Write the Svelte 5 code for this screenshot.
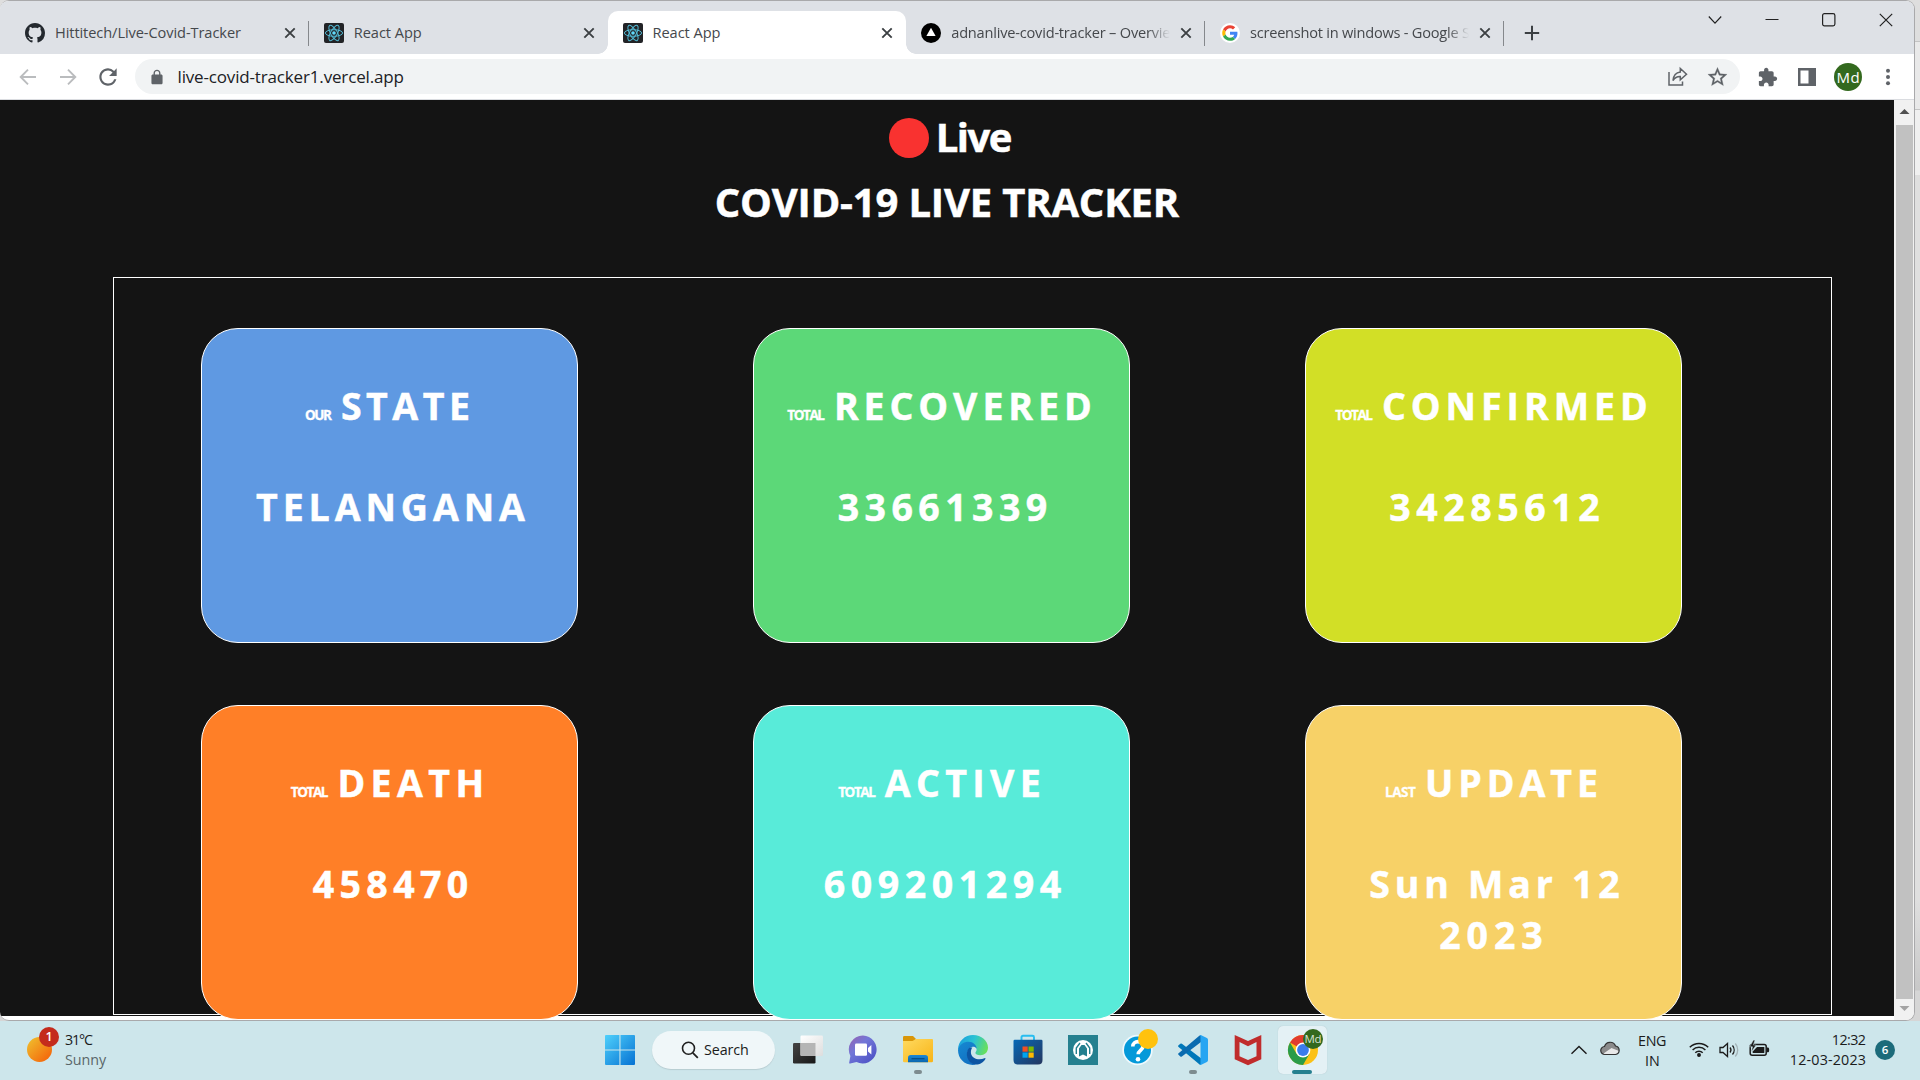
<script>
  const tabs = [
    { icon: 'github', title: 'Hittitech/Live-Covid-Tracker', width: 185, divider: true },
    { icon: 'react', title: 'React App', width: 67 },
    { icon: 'react', title: 'React App', width: 67, active: true },
    { icon: 'vercel', title: 'adnanlive-covid-tracker – Overview', width: 231, divider: true },
    { icon: 'google', title: 'screenshot in windows - Google Search', width: 256, divider: true }
  ];

  const cards = [
    { tone: 'blue', prefix: 'OUR', prefixWidth: 27, label: 'STATE', labelWidth: 126, value: [['TELANGANA', 269]] },
    { tone: 'green', prefix: 'TOTAL', prefixWidth: 38, label: 'RECOVERED', labelWidth: 253, value: [['33661339', 208]] },
    { tone: 'lime', prefix: 'TOTAL', prefixWidth: 38, label: 'CONFIRMED', labelWidth: 262, value: [['34285612', 209]] },
    { tone: 'orange', prefix: 'TOTAL', prefixWidth: 38, label: 'DEATH', labelWidth: 141, value: [['458470', 155]] },
    { tone: 'teal', prefix: 'TOTAL', prefixWidth: 38, label: 'ACTIVE', labelWidth: 154, value: [['609201294', 236]] },
    { tone: 'gold', prefix: 'LAST', prefixWidth: 30, label: 'UPDATE', labelWidth: 168, value: [['Sun Mar 12', 249], ['2023', 101]] }
  ];

  const apps = [
    { name: 'taskview' },
    { name: 'chat' },
    { name: 'explorer', open: true },
    { name: 'edge' },
    { name: 'store' },
    { name: 'alert' },
    { name: 'help' },
    { name: 'vscode', open: true },
    { name: 'mcafee' },
    { name: 'chrome', current: true }
  ];

  // Tracks a run of text so that its ink spans the given width.
  function fit(node, width) {
    const text = node.textContent;
    const style = getComputedStyle(node);
    const ctx = document.createElement('canvas').getContext('2d');
    ctx.font = `${style.fontWeight} ${style.fontSize} ${style.fontFamily}`;
    const m = ctx.measureText(text);
    const ink = m.actualBoundingBoxLeft + m.actualBoundingBoxRight;
    const spacing = (width - ink) / (text.length - 1);
    node.style.letterSpacing = `${spacing}px`;
    node.style.marginRight = `${-spacing}px`;
  }
</script>

{#snippet favicon(name)}
  {#if name === 'github'}
    <svg width="20" height="20" viewBox="0 0 16 16" fill="#24292f"><path d="M8 0C3.58 0 0 3.58 0 8c0 3.54 2.29 6.53 5.47 7.59.4.07.55-.17.55-.38 0-.19-.01-.82-.01-1.49-2.01.37-2.53-.49-2.69-.94-.09-.23-.48-.94-.82-1.13-.28-.15-.68-.52-.01-.53.63-.01 1.08.58 1.23.82.72 1.21 1.87.87 2.33.66.07-.52.28-.87.51-1.07-1.78-.2-3.64-.89-3.64-3.95 0-.87.31-1.59.82-2.15-.08-.2-.36-1.02.08-2.12 0 0 .67-.21 2.2.82.64-.18 1.32-.27 2-.27.68 0 1.36.09 2 .27 1.53-1.04 2.2-.82 2.2-.82.44 1.1.16 1.92.08 2.12.51.56.82 1.27.82 2.15 0 3.07-1.87 3.75-3.65 3.95.29.25.54.73.54 1.48 0 1.07-.01 1.93-.01 2.2 0 .21.15.46.55.38A8.013 8.013 0 0016 8c0-4.42-3.58-8-8-8z" /></svg>
  {:else if name === 'react'}
    <svg width="20" height="20" viewBox="0 0 20 20"><rect width="20" height="20" rx="2" fill="#222326" />
      <g fill="none" stroke="#53b9d3" stroke-width="1"><ellipse cx="10" cy="10" rx="8.6" ry="3.3" /><ellipse cx="10" cy="10" rx="8.6" ry="3.3" transform="rotate(60 10 10)" /><ellipse cx="10" cy="10" rx="8.6" ry="3.3" transform="rotate(120 10 10)" /></g>
      <circle cx="10" cy="10" r="1.8" fill="#61dafb" /></svg>
  {:else if name === 'vercel'}
    <svg width="20" height="20" viewBox="0 0 20 20"><circle cx="10" cy="10" r="10" /><path d="M10 4.800 14.600 13H5.400z" fill="#fff" /></svg>
  {:else}
    <svg width="20" height="20" viewBox="0 0 20 20"><circle cx="10" cy="10" r="10" fill="#fff" />
      <g transform="translate(2.2 2.2) scale(.325)"><path fill="#EA4335" d="M24 9.5c3.54 0 6.71 1.22 9.21 3.6l6.85-6.85C35.9 2.38 30.47 0 24 0 14.62 0 6.51 5.38 2.56 13.22l7.98 6.19C12.43 13.72 17.74 9.5 24 9.5z" /><path fill="#4285F4" d="M46.98 24.55c0-1.57-.15-3.09-.38-4.55H24v9.02h12.94c-.58 2.96-2.26 5.48-4.78 7.18l7.73 6c4.51-4.18 7.09-10.36 7.09-17.65z" /><path fill="#FBBC05" d="M10.53 28.59c-.48-1.45-.76-2.99-.76-4.59s.27-3.14.76-4.59l-7.98-6.19C.92 16.46 0 20.12 0 24c0 3.88.92 7.54 2.56 10.78l7.97-6.19z" /><path fill="#34A853" d="M24 48c6.48 0 11.93-2.13 15.89-5.81l-7.73-6c-2.15 1.45-4.92 2.3-8.16 2.3-6.26 0-11.57-4.22-13.47-9.91l-7.98 6.19C6.51 42.62 14.62 48 24 48z" /></g></svg>
  {/if}
{/snippet}

{#snippet appIcon(name)}
  {#if name === 'taskview'}
    <svg width="32" height="32" viewBox="0 0 32 32">
      <defs><linearGradient id="tvd" x1="0" y1="0" x2="1" y2="1"><stop stop-color="#444" /><stop offset="1" stop-color="#181818" /></linearGradient><linearGradient id="tvl" x1="0" y1="0" x2="1" y2="1"><stop stop-color="#fff" /><stop offset="1" stop-color="#ddd" /></linearGradient></defs>
      <rect x="1" y="9" width="22.5" height="20.5" rx="1.2" fill="url(#tvd)" /><rect x="8.5" y="1.5" width="22.5" height="20.5" rx="1.2" fill="url(#tvl)" /><path d="M8.5 9h15v13h-14a1 1 0 0 1-1-1z" fill="#b5b5b5" /></svg>
  {:else if name === 'chat'}
    <svg width="32" height="32" viewBox="0 0 32 32">
      <defs><linearGradient id="ch" x1="0" y1="0" x2=".9" y2="1"><stop stop-color="#9a62ae" /><stop offset=".4" stop-color="#7377d8" /><stop offset="1" stop-color="#4a4fc4" /></linearGradient></defs>
      <path d="M16 1.5a14 14 0 1 1-6.5 26.6L3.2 29.6q-1.3.2-1-1.2L3.4 22A14 14 0 0 1 16 1.5z" fill="url(#ch)" /><rect x="8" y="9.5" width="12" height="12.3" rx="1.3" fill="#fff" /><path d="m21 14 3.4-3v9.6l-3.4-3z" fill="#fff" /></svg>
  {:else if name === 'explorer'}
    <svg width="32" height="32" viewBox="0 0 32 32">
      <defs><linearGradient id="fo" x1="0" y1="0" x2="1" y2="1"><stop stop-color="#ffda60" /><stop offset="1" stop-color="#f8b417" /></linearGradient><linearGradient id="fb" x1="0" y1="0" x2="0" y2="1"><stop stop-color="#1b87d6" /><stop offset="1" stop-color="#0966ae" /></linearGradient></defs>
      <path d="M1 3.3Q1 2 2.3 2H11l3 3-3 4H1z" fill="#d99608" /><path d="M1 7h9.5L14 5h16q1 0 1 1v21q0 1.3-1.3 1.3H2.3Q1 28.3 1 27z" fill="url(#fo)" /><path d="M6 28.3v-4.5Q6 21 8.8 21h14.4Q26 21 26 23.8v4.5z" fill="url(#fb)" /><path d="M9.500 24.700h13" stroke="#064f8a" stroke-width="1.3" /></svg>
  {:else if name === 'edge'}
    <svg width="32" height="32" viewBox="0 0 32 32">
      <defs><linearGradient id="e1" x1="0" y1=".3" x2="1" y2=".55"><stop stop-color="#1a9fde" /><stop offset=".5" stop-color="#2bc3d2" /><stop offset="1" stop-color="#69e05a" /></linearGradient><linearGradient id="e2" x1="0" y1="0" x2=".5" y2="1"><stop stop-color="#1689d2" /><stop offset="1" stop-color="#1271c2" /></linearGradient></defs>
      <path d="M1 16C1 7 8 1 16 1c8.5 0 15 6 15 12.5 0 5-3.6 7.7-7.6 7.7-3.3 0-5-1.2-5-2.3 0-.9 1.2-1.2 1.2-3.3 0-2.6-3-5.6-7.6-5.6-4.5 0-8.5 2-11 6z" fill="url(#e1)" />
      <path d="M1 16c1.5-6 6-8.3 10.5-8.3 4.7 0 8.2 3.5 8.2 7-1.2-1.7-3-2.2-4.7-1.7-4 1.2-5.7 6-4 10.3 1.3 3.6 4 6.5 8 7.3C9 32.5 1 25.5 1 16z" fill="url(#e2)" />
      <path d="M12.5 13.8C8 17 8.8 29.5 19 30.6c4 0 7.5-2.3 9.4-5.7.3-.7-.3-1-.9-.7-5.5 2.500-12.500.5-13.500-4.700-.3-2 .1-4.200 1.400-5.900z" fill="#0d55a3" /></svg>
  {:else if name === 'store'}
    <svg width="32" height="32" viewBox="0 0 32 32">
      <defs><linearGradient id="st" x1="0" y1="0" x2="1" y2="1"><stop stop-color="#0769b6" /><stop offset="1" stop-color="#24365f" /></linearGradient></defs>
      <path d="M9.5 7V3.2Q9.5 1.8 11 1.800h9.500q1.500 0 1.500 1.400V7" fill="none" stroke="#27bdf0" stroke-width="1.9" /><path d="M1.5 7q0-1.2 1.2-1.200h26.600q1.200 0 1.200 1.200v19q0 4.500-4.500 4.500H6Q1.500 30.500 1.500 26z" fill="url(#st)" />
      <path d="M10.500 12.500h5.200v5.200h-5.200z" fill="#f25022" /><path d="M16.500 12.500h5.200v5.200h-5.200z" fill="#7fba00" /><path d="M10.500 18.500h5.200v5.200h-5.200z" fill="#00a4ef" /><path d="M16.500 18.500h5.200v5.200h-5.200z" fill="#ffb900" /></svg>
  {:else if name === 'alert'}
    <svg width="32" height="32" viewBox="0 0 32 32"><path d="M1 1h30v30H1z" fill="#25808f" /><circle cx="16" cy="16" r="10" fill="#fff" />
      <path d="M12 22.500v-8L14.500 11h3l2.500 3.500v8L16 20.500z" fill="#25808f" /><path d="M9.300 20v-6l3.700-5M22.700 20v-6L19 9" fill="none" stroke="#25808f" stroke-width="1.400" /></svg>
  {:else if name === 'help'}
    <svg width="32" height="32" viewBox="0 0 32 32"><circle cx="15.500" cy="16" r="15.200" fill="#eef9fd" /><circle cx="15.500" cy="16" r="13.500" fill="#0499d9" /><path d="M10.800 12.500c0-6.500 10.200-6.300 10.200-.3 0 4-4.800 4.300-4.800 8" fill="none" stroke="#fff" stroke-width="3.600" /><circle cx="16" cy="25.200" r="2.300" fill="#fff" /></svg>
  {:else if name === 'vscode'}
    <svg width="32" height="32" viewBox="0 0 32 32"><path d="m1.300 11.600 2-1.800q.8-.6 1.600 0L24 24.300v6.400q-1 .2-1.700-.5L1.300 12.800q-.5-.6 0-1.200z" fill="#0077b9" /><path d="m1.300 20.600 2 1.800q.8.600 1.600 0L24 7.900V1.300q-1-.2-1.700.5L1.300 19.400q-.5.600 0 1.200z" fill="#0a6bb0" /><path d="M22.300 1.700q.9-.9 2-.4l5.600 2.700q1.100.6 1.100 1.800v20.400q0 1.200-1.100 1.800l-5.600 2.700q-1.100.5-2-.4 1 .5 1.200-.8V2.500q-.2-1.300-1.200-.8z" fill="#27a5f2" /></svg>
  {:else if name === 'mcafee'}
    <svg width="32" height="32" viewBox="0 0 32 32"><path d="M2.700 1 16 7l13.300-6v24.200L16 31.300 2.700 25.200zM7.500 8v14.200L16 26l8.500-3.800V8L16 12.200z" fill="#c02c2c" fill-rule="evenodd" /></svg>
  {:else}
    <svg width="32" height="32" viewBox="0 0 32 32"><circle cx="16" cy="16" r="15" fill="#fbc116" /><path d="M16 16 3 8.500A15 15 0 0 1 29 8.500H16z" fill="#e23b2e" /><path d="M3 8.500A15 15 0 0 0 16 31l6.500-11.200L16 16l-6.500 3.700z" fill="#2a9c49" /><circle cx="16" cy="16" r="7.400" fill="#fff" /><circle cx="16" cy="16" r="5.900" fill="#3b7cec" /></svg>
  {/if}
{/snippet}

<div class="screen">
  <div class="window">
    <header class="tabstrip">
      <div class="tabs">
        {#each tabs as tab}
          <div class="tab" class:active={tab.active} class:divider={tab.divider}>
            {@render favicon(tab.icon)}
            <div class="tab-title" class:faded={tab.width > 200}><span use:fit={tab.width}>{tab.title}</span></div>
            <svg class="close" width="12" height="12" viewBox="0 0 12 12"><path d="m1.300 1.300 9.400 9.400m0-9.400-9.400 9.400" stroke="#3c4043" stroke-width="1.900" /></svg>
          </div>
        {/each}
        <svg class="new-tab" width="16" height="16" viewBox="0 0 16 16"><path d="M8 .8v14.400M.8 8h14.400" stroke="#3c4043" stroke-width="2" /></svg>
      </div>
      <div class="controls">
        <svg width="14" height="14" viewBox="0 0 14 14"><path d="m.8 3.500 6.200 6.700 6.200-6.700" /></svg>
        <svg width="14" height="14" viewBox="0 0 14 14"><path d="M.5 6.500h13" /></svg>
        <svg width="14" height="14" viewBox="0 0 14 14"><rect x=".6" y=".6" width="12.300" height="12.300" rx="1.800" /></svg>
        <svg width="14" height="14" viewBox="0 0 14 14"><path d="m.8.8 12.400 12.400m0-12.400L.8 13.200" /></svg>
      </div>
    </header>

    <div class="toolbar">
      <div class="nav">
        <svg width="18" height="18" viewBox="0 0 18 18"><path d="M17 9H2M9 1.700 1.700 9 9 16.300" fill="none" stroke="#babcbe" stroke-width="1.900" /></svg>
        <svg width="18" height="18" viewBox="0 0 18 18"><path d="M1 9h15M9 1.700 16.300 9 9 16.300" fill="none" stroke="#babcbe" stroke-width="1.900" /></svg>
        <svg width="26" height="26" viewBox="0 0 24 24"><path fill="#5f6368" d="M17.650 6.350A7.958 7.958 0 0012 4c-4.420 0-7.990 3.580-7.990 8s3.570 8 7.990 8c3.730 0 6.840-2.550 7.730-6h-2.080A5.990 5.990 0 0112 18c-3.310 0-6-2.690-6-6s2.690-6 6-6c1.660 0 3.140.69 4.220 1.780L13 11h7V4l-2.350 2.350z" /></svg>
      </div>
      <div class="omnibox">
        <svg width="16" height="16" viewBox="2 0 20 23"><path fill="#5f6368" d="M18 8h-1V6c0-2.760-2.240-5-5-5S7 3.240 7 6v2H6c-1.100 0-2 .9-2 2v10c0 1.100.9 2 2 2h12c1.100 0 2-.9 2-2V10c0-1.100-.9-2-2-2zM9 6c0-1.660 1.340-3 3-3s3 1.340 3 3v2H9V6z" /></svg>
        <div class="url"><span use:fit={225}>live-covid-tracker1.vercel.app</span></div>
        <svg width="22" height="22" viewBox="0 0 22 22" fill="none" stroke="#5f6368" stroke-width="1.500"><path d="M2 6v13h13.500v-3.500" /><path d="M6 14.500C6.500 9 9.500 6.500 13.300 6V2.500l6.200 5.700-6.200 5.600v-3.400C10 10.200 7.800 11.700 6 14.500z" /></svg>
        <svg width="22" height="22" viewBox="0 0.500 23 23"><path fill="#5f6368" stroke="#5f6368" stroke-width=".3" d="M22 9.240l-7.190-.62L12 2 9.190 8.630 2 9.240l5.460 4.730L5.820 21 12 17.270 18.180 21l-1.630-7.030L22 9.240zM12 15.400l-3.760 2.270 1-4.280-3.320-2.880 4.380-.38L12 6.100l1.710 4.040 4.380.38-3.320 2.880 1 4.280L12 15.400z" /></svg>
      </div>
      <div class="actions">
        <svg width="20" height="20" viewBox="1 0 23 23"><path fill="#5f6368" d="M20.500 11H19V7c0-1.100-.9-2-2-2h-4V3.500C13 2.120 11.880 1 10.500 1S8 2.120 8 3.500V5H4c-1.100 0-1.990.9-1.990 2v3.800H3.500c1.490 0 2.700 1.210 2.700 2.700s-1.210 2.700-2.700 2.700H2V20c0 1.100.9 2 2 2h3.800v-1.500c0-1.490 1.210-2.700 2.700-2.700 1.490 0 2.700 1.210 2.700 2.700V22H17c1.100 0 2-.9 2-2v-4h1.500c1.380 0 2.500-1.120 2.500-2.500S21.880 11 20.500 11z" /></svg>
        <svg width="20" height="20" viewBox="0 0 20 20"><path fill="#5f6368" fill-rule="evenodd" d="M1 1h18v18H1zM3.500 3.500v13h8v-13z" /></svg>
        <div class="avatar"><span use:fit={21}>Md</span></div>
        <svg width="20" height="20" viewBox="0 0 20 20" fill="#5f6368"><circle cx="9" cy="3.700" r="2" /><circle cx="9" cy="10" r="2" /><circle cx="9" cy="16.300" r="2" /></svg>
      </div>
    </div>

    <div class="viewport">
      <main class="page">
        <div class="live"><i></i><span use:fit={72}>Live</span></div>
        <h1><span use:fit={463}>COVID-19 LIVE TRACKER</span></h1>
        <section class="grid">
          {#each cards as card}
            <article class="card {card.tone}">
              <div class="card-label"><small use:fit={card.prefixWidth}>{card.prefix}</small><span use:fit={card.labelWidth}>{card.label}</span></div>
              <div class="card-value">
                {#each card.value as [line, width]}
                  <div><span use:fit={width}>{line}</span></div>
                {/each}
              </div>
            </article>
          {/each}
        </section>
      </main>
      <div class="scrollbar">
        <svg width="20" height="25" viewBox="0 0 20 25"><path d="M5.500 14 10.500 9l5 5z" fill="#505050" /></svg>
        <div class="thumb"></div>
        <svg width="20" height="21" viewBox="0 0 20 21"><path d="m5.500 7 5 5 5-5z" fill="#a3a3a3" /></svg>
      </div>
    </div>
  </div>

  <footer class="taskbar">
    <div class="weather">
      <div class="sun"><b>1</b></div>
      <div class="stack left"><div><span use:fit={28}>31°C</span></div><div class="dim"><span use:fit={42}>Sunny</span></div></div>
    </div>
    <div class="dock">
      <div class="slot">
        <svg width="30" height="30" viewBox="0 0 30 30"><defs><linearGradient id="win" gradientUnits="userSpaceOnUse" x1="0" y1="0" x2="30" y2="30"><stop stop-color="#4fd0fb" /><stop offset="1" stop-color="#0672d3" /></linearGradient></defs><path fill="url(#win)" d="M0 1q0-1 1-1h13.400v14.400H0zM15.500 0H29q1 0 1 1v13.400H15.500zM0 15.500h14.400V30H1q-1 0-1-1zM15.500 15.500H30V29q0 1-1 1H15.500z" /></svg>
      </div>
      <div class="search">
        <svg width="18" height="18" viewBox="0 0 18 18"><circle cx="7.500" cy="7.300" r="6" fill="none" stroke="#202020" stroke-width="1.600" /><path d="m11.800 11.800 5 5" stroke="#202020" stroke-width="1.800" /></svg>
        <span use:fit={44}>Search</span>
      </div>
      {#each apps as app}
        <div class="slot" class:current={app.current} class:open={app.open}>
          {@render appIcon(app.name)}
          {#if app.name === 'help'}<i class="dot"></i>{/if}
          {#if app.name === 'chrome'}<div class="md"><span use:fit={16}>Md</span></div>{/if}
        </div>
      {/each}
    </div>
    <div class="tray">
      <svg class="up" width="18" height="10" viewBox="0 0 18 10"><path d="m1.500 8.800 7.500-7.300 7.500 7.300" fill="none" stroke="#1b1b1b" stroke-width="1.400" /></svg>
      <svg class="cloud" width="20" height="16" viewBox="0 0 20 16"><path d="M5 14.500a4 4 0 0 1-.5-8A5.800 5.800 0 0 1 15.500 6a4.300 4.300 0 0 1 0 8.500z" fill="#8b8b8b" /><path d="M3.500 13.500 11.500 8l7.500 3q-.5 3-4 3.500H5z" fill="#e9e9e9" /><path d="M5 14.500a4 4 0 0 1-.5-8A5.800 5.800 0 0 1 15.500 6a4.300 4.300 0 0 1 0 8.500z" fill="none" stroke="#333" stroke-width="1.200" /></svg>
      <div class="stack lang"><div><span use:fit={27}>ENG</span></div><div><span use:fit={13}>IN</span></div></div>
      <svg class="wifi" width="20" height="16" viewBox="0 0 20 16" fill="none" stroke="#1b1b1b" stroke-width="1.500"><path d="M.8 6.200a13 13 0 0 1 18.400 0M3.600 9a9 9 0 0 1 12.800 0M6.300 11.700a5.300 5.300 0 0 1 7.400 0" /><circle cx="10" cy="14" r="1.200" fill="#1b1b1b" /></svg>
      <svg class="sound" width="21" height="16" viewBox="0 0 21 16" fill="none" stroke="#1b1b1b" stroke-width="1.300"><path d="M1 5.500h3l4.500-4v13l-4.500-4H1z" /><path d="M11 5.500a4 4 0 0 1 0 5M13.500 3.500a7 7 0 0 1 0 9" /><path d="M16.300 1.500a10 10 0 0 1 0 13" stroke="#a4b3b7" /></svg>
      <svg class="battery" width="21" height="17" viewBox="0 0 21 17"><rect x="1.200" y="4.500" width="16" height="10.800" rx="2" fill="none" stroke="#1b1b1b" stroke-width="1.500" /><path d="M8 7h7.300v6H3.700v-1.500z" fill="#1b1b1b" /><path d="M18 7.500h1.200q1 .2 1 2.400t-1 2.400H18z" fill="#1b1b1b" /><path d="M4.500 0 .5 6.800h3L2.300 12 7.200 5H4.300L6 .2z" fill="#1b1b1b" stroke="#cde6eb" stroke-width=".5" /></svg>
      <div class="stack clock"><div><span use:fit={33}>12:32</span></div><div><span use:fit={75}>12-03-2023</span></div></div>
      <b class="count">6</b>
    </div>
  </footer>
</div>

<style>
  :global(body) {
    margin: 0;
    overflow: hidden;
  }
  .screen {
    width: 1920px;
    height: 1080px;
    overflow: hidden;
    display: flex;
    flex-direction: column;
    font-family: 'Open Sans', 'Noto Sans', sans-serif;
    background: linear-gradient(#dedede 41px, #c4c4c4 41px 42px, #e9e9e9 42px 109px, #c4c4c4 109px 110px, #f0f0f0 110px 175px, #dfdfdf 175px 900px, #c8c8c8 990px, #d6d6d6 991px);
  }
  svg {
    display: block;
    flex: none;
  }
  span {
    white-space: pre;
  }
  .window {
    box-sizing: border-box;
    width: 1915px;
    height: 1021px;
    border: solid #a9a9ab;
    border-width: 1px 1px 1px 0;
    border-radius: 9px;
    overflow: hidden;
    background: #fff;
  }
  .tabstrip {
    height: 53px;
    background: #dee1e6;
    display: flex;
    justify-content: space-between;
  }
  .tabs {
    display: flex;
    padding: 10px 0 0 10px;
  }
  .tab {
    box-sizing: border-box;
    position: relative;
    width: 298.750px;
    padding: 0 23px 0 15px;
    display: flex;
    align-items: center;
    font-size: 14.600px;
    line-height: 24px;
    color: #45484c;
  }
  .tab-title {
    width: 219px;
    margin: -1px 0 0 10px;
    overflow: hidden;
  }
  .tab-title.faded {
    mask-image: linear-gradient(90deg, #000 90%, transparent 100%);
  }
  .close {
    margin-left: auto;
    margin-right: -10px;
  }
  .active {
    background: #fff;
    border-radius: 10px 10px 0 0;
  }
  .active::before,
  .active::after {
    content: '';
    position: absolute;
    bottom: 0;
    width: 10px;
    height: 10px;
  }
  .active::before {
    left: -10px;
    background: radial-gradient(circle at 0 0, transparent 9.500px, #fff 10px);
  }
  .active::after {
    right: -10px;
    background: radial-gradient(circle at 100% 0, transparent 9.500px, #fff 10px);
  }
  .divider::after {
    content: '';
    position: absolute;
    right: 0;
    top: 10px;
    width: 1px;
    height: 25px;
    background: #85888c;
  }
  .new-tab {
    margin: 14px 0 0 20px;
  }
  .controls {
    display: flex;
    gap: 43px;
    padding: 12px 21px 0 0;
    fill: none;
    stroke: #222;
    stroke-width: 1.200;
  }
  .toolbar {
    height: 45px;
    display: flex;
    align-items: center;
    border-bottom: 1px solid #dadce0;
  }
  .nav {
    box-sizing: border-box;
    width: 135px;
    padding-left: 19px;
    display: flex;
    align-items: center;
    gap: 22px;
  }
  .nav svg:last-child {
    margin-left: -4px;
  }
  .omnibox {
    box-sizing: border-box;
    width: 1605px;
    height: 35px;
    border-radius: 18px;
    background: #f1f3f4;
    padding: 0 12px 0 14px;
    display: flex;
    align-items: center;
  }
  .url {
    flex: 1;
    margin-left: 12.500px;
    font-size: 17px;
    line-height: 24px;
    color: #202124;
  }
  .omnibox svg:last-child {
    margin-left: 17px;
  }
  .actions {
    display: flex;
    align-items: center;
    padding-left: 18px;
    gap: 19px;
  }
  .avatar {
    width: 28px;
    height: 28px;
    margin: 0 -2px;
    border-radius: 50%;
    background: #33691e;
    color: #fff;
    font-size: 15px;
    line-height: 28px;
    text-align: center;
  }
  .viewport {
    height: 920px;
    display: flex;
    overflow: hidden;
  }
  .page {
    box-sizing: border-box;
    width: 1894px;
    height: 916px;
    padding-top: 12px;
    background: #141414;
    color: #fff;
    font-weight: 700;
    -webkit-text-stroke: .5px #fff;
  }
  .live,
  h1 {
    margin: 0;
    height: 50px;
    font-size: 40px;
    line-height: 50px;
    text-align: center;
  }
  .live {
    display: flex;
    align-items: center;
    justify-content: center;
    gap: 7px;
    padding-left: 7px;
  }
  .live i {
    width: 40px;
    height: 40px;
    margin-top: 2px;
    border-radius: 50%;
    background: #f93230;
  }
  h1 {
    margin-top: 15px;
  }
  .grid {
    box-sizing: border-box;
    width: 1719px;
    height: 738px;
    margin: 50px 0 0 113px;
    border: 1px solid #fff;
    padding: 50px 0 0 87px;
    display: grid;
    grid-template-columns: repeat(3, 377px);
    grid-auto-rows: 315px;
    gap: 62px 175px;
  }
  .card {
    box-sizing: border-box;
    border: 1px solid #fff;
    border-radius: 37px;
    padding-top: 51px;
    font-size: 37.500px;
    line-height: 51px;
    text-align: center;
  }
  .card-label {
    height: 51px;
    display: flex;
    justify-content: center;
    align-items: baseline;
    gap: 9px;
    padding-right: 4px;
  }
  .card-label small {
    font-size: 13.500px;
    -webkit-text-stroke-width: .3px;
  }
  .card-value {
    margin-top: 50px;
    padding-left: 2px;
  }
  .card-value div + div {
    padding-right: 7px;
  }
  .blue { background: #5f99e2; }
  .green { background: #5cd878; }
  .lime { background: #d2df26; }
  .orange { background: #ff7f27; }
  .teal { background: #58ebd9; }
  .gold { background: #f7d167; }
  .scrollbar {
    width: 20px;
    height: 920px;
    background: #f1f1f1;
    display: flex;
    flex-direction: column;
  }
  .thumb {
    flex: 1;
    margin: 0 1px 0 2px;
    background: #c1c1c1;
  }
  .taskbar {
    flex: 1;
    background: #cde6eb;
    display: flex;
    font-size: 14.300px;
    color: #1b1b1b;
  }
  .weather {
    box-sizing: border-box;
    width: 592px;
    display: flex;
    padding-left: 27px;
  }
  .sun {
    position: relative;
    width: 25px;
    height: 25px;
    margin: 16px 13px 0 0;
    border-radius: 50%;
    background: linear-gradient(135deg, #f0b429 15%, #f4700f 80%);
  }
  .sun b {
    position: absolute;
    left: 12px;
    top: -10px;
    width: 20px;
    height: 20px;
    border-radius: 50%;
    background: #c42b1c;
    color: #fff;
    font-size: 12.500px;
    font-weight: 600;
    line-height: 20px;
    text-align: center;
  }
  .stack {
    padding-top: 9px;
    line-height: 20px;
  }
  .dim {
    color: #5a6669;
  }
  .dock {
    display: flex;
  }
  .slot {
    position: relative;
    width: 49px;
    height: 48px;
    margin: 5px 3px 0;
    display: flex;
    align-items: center;
    justify-content: center;
    border-radius: 5px;
  }
  .search {
    box-sizing: border-box;
    width: 123px;
    height: 38px;
    margin: 10px 5px 0 5px;
    padding-left: 29px;
    border-radius: 19px;
    background: #f0f7f9;
    box-shadow: 0 1px 1px #b7ccd1;
    display: flex;
    align-items: center;
    gap: 5px;
    line-height: 38px;
  }
  .open::after {
    content: '';
    position: absolute;
    left: 21px;
    bottom: 0;
    width: 8px;
    height: 4px;
    border-radius: 2px;
    background: #7d8c8f;
  }
  .current {
    background: #e4f1f5;
    box-shadow: 0 0 1px #a9bdc2;
  }
  .current::after {
    content: '';
    position: absolute;
    left: 14px;
    bottom: 0;
    width: 20px;
    height: 4px;
    border-radius: 2px;
    background: #25808f;
  }
  .dot {
    position: absolute;
    left: 25px;
    top: 3px;
    width: 20px;
    height: 20px;
    border-radius: 50%;
    background: #ffc20e;
  }
  .md {
    position: absolute;
    left: 25px;
    top: 3px;
    width: 20px;
    height: 20px;
    border-radius: 50%;
    background: #33691e;
    color: #d9e3d5;
    font-size: 11.500px;
    line-height: 20px;
    text-align: center;
  }
  .tray {
    flex: 1;
    display: flex;
    justify-content: flex-end;
    padding-right: 25px;
  }
  .up { margin: 24px 12px 0 0; }
  .cloud { margin: 19px 17px 0 0; }
  .lang {
    width: 31px;
    margin-right: 21px;
    padding-top: 10px;
    text-align: center;
  }
  .wifi { margin: 20px 10px 0 0; }
  .sound { margin: 21px 9px 0 0; }
  .battery { margin: 19px 20px 0 0; }
  .clock {
    text-align: right;
    margin-right: 9px;
  }
  .count {
    width: 20px;
    height: 20px;
    margin-top: 19px;
    border-radius: 50%;
    background: #1c6b7a;
    color: #fff;
    font-size: 11.500px;
    font-weight: 600;
    line-height: 20px;
    text-align: center;
  }
</style>
